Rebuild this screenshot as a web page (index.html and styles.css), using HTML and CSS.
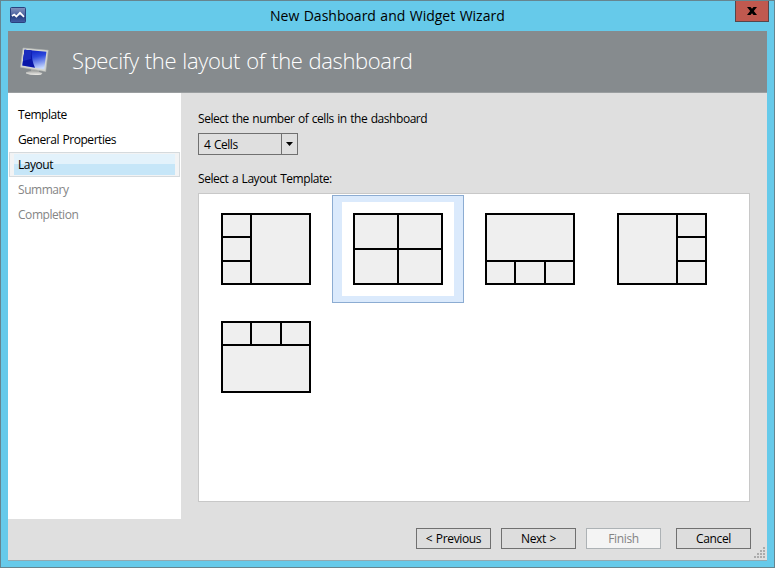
FILE: index.html
```html
<!DOCTYPE html>
<html lang="en">
<head>
<meta charset="utf-8">
<title>New Dashboard and Widget Wizard</title>
<link rel="stylesheet" href="styles.css">
</head>
<body>
<div class="window">
  <header class="titlebar">
    <svg class="app-icon" width="16" height="16" viewBox="0 0 16 16">
      <defs><linearGradient id="app" x1="0" y1="0" x2="0" y2="1"><stop offset="0" stop-color="#8393bd"/><stop offset=".5" stop-color="#4c62a0"/><stop offset=".6" stop-color="#273f80"/><stop offset="1" stop-color="#4461a8"/></linearGradient></defs>
      <rect x=".5" y=".5" width="15" height="15" rx="1" fill="url(#app)" stroke="#29417f"/>
      <path d="M2 9 4.2 7.5 6.4 9.5 10 5.8 14 9.8" fill="none" stroke="#fff" stroke-width="1.7"/>
    </svg>
    <h1 class="window-title">New Dashboard and Widget Wizard</h1>
    <button class="close" aria-label="Close"><svg width="10" height="8" viewBox="0 0 10 8"><path d="M0 0h3.5L5 1.8 6.5 0H10L6.8 4 10 8H6.5L5 6.2 3.5 8H0l3.2-4z" fill="#000"/></svg></button>
  </header>
  <div class="client">
    <div class="banner">
      <svg class="monitor" width="30" height="32" viewBox="0 0 30 32">
        <defs>
          <linearGradient id="screen" x1=".3" y1="0" x2=".6" y2="1"><stop offset="0" stop-color="#0a1cc0"/><stop offset=".4" stop-color="#2c48dc"/><stop offset="1" stop-color="#c8daff"/></linearGradient>
          <linearGradient id="base" x1="0" y1="0" x2="0" y2="1"><stop offset="0" stop-color="#a9aaa8"/><stop offset="1" stop-color="#efeeea"/></linearGradient>
        </defs>
        <path d="M11 22.5 19 24v3H11z" fill="#a2a4a2"/>
        <path d="M6 26.3Q13 23.5 22.5 27L21 28.7Q12 29.8 6 27.5z" fill="url(#base)"/>
        <path d="M3 2 28.2 4.3 25.7 25.5.5 21.2z" fill="#d5d7d2" stroke="#b3b7b4" stroke-width=".6"/>
        <path d="M4.6 3.8 26.4 5.8 24.2 23.2 2.3 19.6z" fill="url(#screen)"/>
        <path d="M4.6 3.8 11.5 4.4Q11.5 14 15 21.7L2.3 19.6z" fill="#0916a8"/>
        <path d="M4.6 3.8 11.5 4.4Q10.5 9 11 13L3 15z" fill="#1a2dbe"/>
      </svg>
      <h2 class="banner-title">Specify the layout of the dashboard</h2>
    </div>
    <div class="body">
      <nav class="steps">
        <div class="step">Template</div>
        <div class="step">General Properties</div>
        <div class="step current">Layout</div>
        <div class="step pending">Summary</div>
        <div class="step pending">Completion</div>
      </nav>
      <main class="page">
        <div class="label">Select the number of cells in the dashboard</div>
        <div class="combo"><span class="combo-value">4 Cells</span><span class="combo-arrow"><svg width="7" height="4" viewBox="0 0 7 4"><path d="M0 0h7L3.5 4z"/></svg></span></div>
        <div class="label second">Select a Layout Template:</div>
        <div class="templates">
          <div class="item"><div class="thumb left-stack"><i class="big"></i><i></i><i></i><i></i></div></div>
          <div class="item selected"><div class="thumb quad"><i></i><i></i><i></i><i></i></div></div>
          <div class="item"><div class="thumb bottom-row"><i class="big"></i><i></i><i></i><i></i></div></div>
          <div class="item"><div class="thumb right-stack"><i class="big"></i><i></i><i></i><i></i></div></div>
          <div class="item"><div class="thumb top-row"><i></i><i></i><i></i><i class="big"></i></div></div>
        </div>
      </main>
    </div>
    <footer class="actions">
      <button class="btn">&lt; Previous</button>
      <button class="btn">Next &gt;</button>
      <button class="btn" disabled>Finish</button>
      <button class="btn cancel">Cancel</button>
      <svg class="grip" width="11" height="11" viewBox="0 0 11 11"><path d="M9 0h2v2H9zM6 3h2v2H6zM9 3h2v2H9zM3 6h2v2H3zM6 6h2v2H6zM9 6h2v2H9zM0 9h2v2H0zM3 9h2v2H3zM6 9h2v2H6zM9 9h2v2H9z" fill="#ababab"/></svg>
    </footer>
  </div>
</div>
</body>
</html>
```
FILE: styles.css
```css
* { box-sizing: border-box; }
body {
  margin: 0;
  font: 12px/16px "Open Sans", "Noto Sans", sans-serif;
  letter-spacing: -0.45px;
  word-spacing: 0.8px;
  color: #000;
}
.window {
  width: 775px;
  height: 568px;
  border: 1px solid #66858f;
  background: #66caea;
  padding: 0 7px 7px;
}
.titlebar { height: 30px; display: flex; align-items: flex-start; }
.app-icon { margin: 6px 0 0 2px; flex: none; }
.window-title {
  flex: 1;
  margin: 5px 0 0 -18px;
  padding-left: 262px;
  font-size: 14px;
  line-height: 20px;
  font-weight: 400;
  letter-spacing: 0;
  white-space: nowrap;
}
.close {
  width: 34px;
  height: 21px;
  margin-right: -2px;
  padding: 0;
  display: flex;
  align-items: center;
  justify-content: center;
  border: 1px solid #56464b;
  border-top: 0;
  background: #c0594f;
}
.client {
  height: 530px;
  display: flex;
  flex-direction: column;
  background: #dfdfdf;
  border-bottom: 1px solid #92a9b1;
}
.banner {
  height: 62px;
  display: flex;
  align-items: center;
  background: #868b8e;
  border-bottom: 1px solid #9a9ea0;
}
.monitor { margin: 1px 0 0 12px; flex: none; }
.banner-title {
  margin: 0 0 4px 22px;
  color: #fff;
  font-size: 22px;
  line-height: 32px;
  font-weight: 300;
  letter-spacing: -0.37px;
  white-space: nowrap;
}
.body { height: 426px; display: flex; }
.steps { width: 173px; background: #fff; padding: 9px 1px; }
.step {
  height: 25px;
  padding: 4px 8px;
  border: 1px solid transparent;
}
.current {
  border-color: #d5dadd;
  background: linear-gradient(#e3f2fb 0 10px, #c6e6f8 10px) 4px 1px / 161px 21px no-repeat #f2f3f4;
}
.pending { color: #858585; }
.page { width: 586px; padding: 18px 17px 0; }
.label { height: 16px; white-space: nowrap; }
.combo {
  width: 100px;
  height: 22px;
  margin-top: 6px;
  display: flex;
  border: 1px solid #707070;
}
.combo-value { flex: 1; padding: 3px 5px; }
.combo-arrow {
  width: 16px;
  display: flex;
  align-items: center;
  justify-content: center;
  border-left: 1px solid #707070;
}
.second { margin-top: 16px; }
.templates {
  width: 552px;
  height: 309px;
  margin-top: 6px;
  padding: 1px;
  display: flex;
  flex-wrap: wrap;
  align-content: flex-start;
  border: 1px solid #c8c8c8;
  background: #fff;
}
.item {
  width: 132px;
  height: 108px;
  padding: 6px 9px;
  border: 1px solid transparent;
}
.selected { border-color: #8cacd2; background: #dbeafc; }
.selected .thumb { outline: 11px solid #fff; }
.thumb {
  width: 90px;
  height: 72px;
  margin: 11px;
  padding: 2px;
  display: grid;
  gap: 2px;
  background: #000;
}
.thumb i { background: #efefef; }
.left-stack { grid-template: 21px 22px 21px / 27px 57px; }
.left-stack .big { grid-area: 1 / 2 / 4 / 3; }
.right-stack { grid-template: 21px 22px 21px / 57px 27px; }
.right-stack .big { grid-area: 1 / 1 / 4 / 2; }
.quad { grid-template: 33px 33px / 42px 42px; }
.top-row { grid-template: 21px 45px / 27px 28px 27px; }
.bottom-row { grid-template: 45px 21px / 27px 28px 27px; }
.top-row .big, .bottom-row .big { grid-column: 1 / 4; }
.actions {
  flex: 1;
  display: flex;
  justify-content: flex-end;
  padding: 9px 2px 0 0;
}
.btn {
  width: 75px;
  height: 21px;
  margin-right: 10px;
  padding: 0;
  font: inherit;
  letter-spacing: -0.35px;
  word-spacing: inherit;
  color: #000;
  border: 1px solid #707070;
  background: #dddddd;
}
.btn:disabled { margin-right: 15px; color: #838383; background: #f4f4f4; border-color: #adb2b5; }
.cancel { margin-right: 3px; }
.grip { align-self: flex-end; margin-bottom: 2px; }
```
